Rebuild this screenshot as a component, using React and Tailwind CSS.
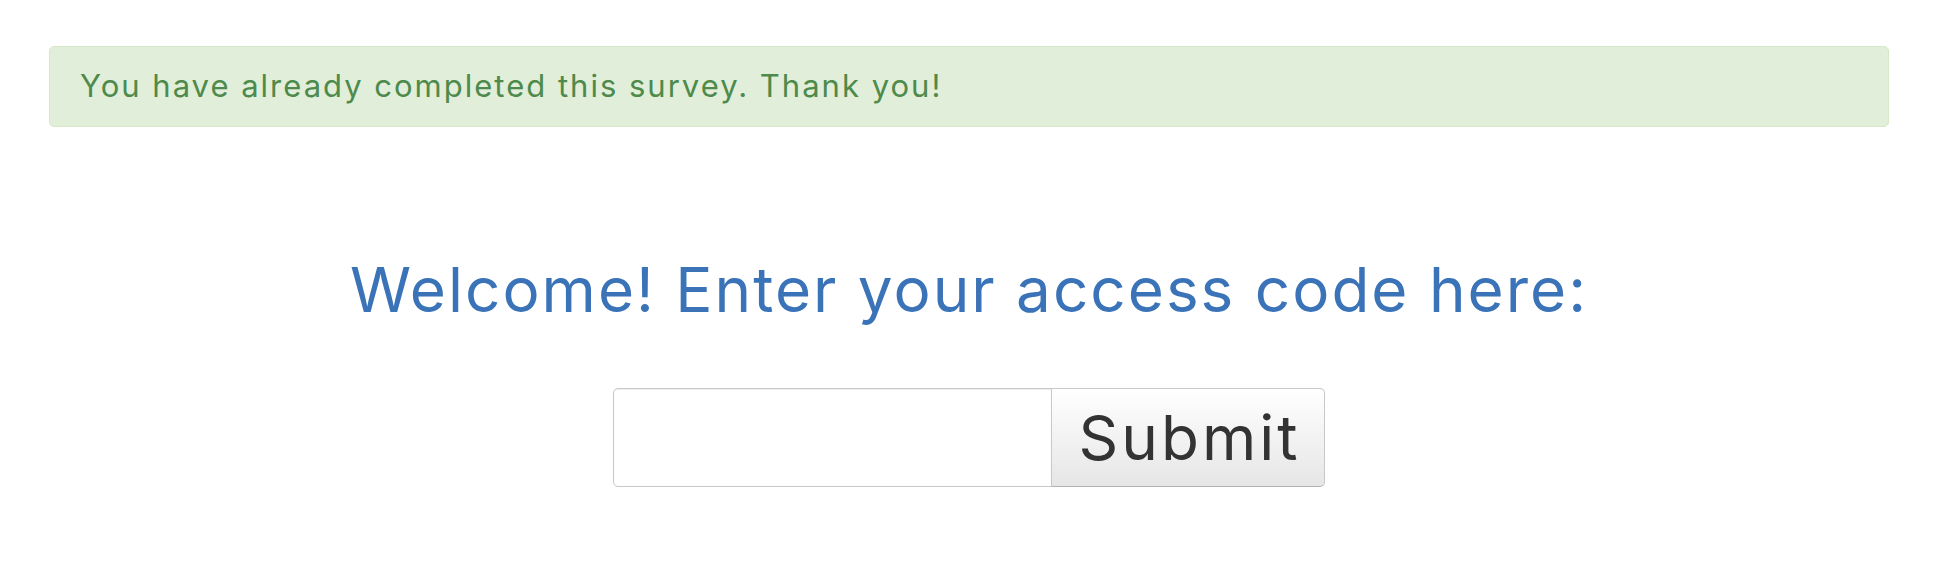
export default function App() {
  return (
    <div
      className="w-[1948px] h-[582px] bg-white"
      style={{ fontFamily: "Inter, 'Noto Sans', sans-serif" }}
    >
      <div className="ml-[49px] w-[1840px] pt-[46px]">
        <div className="h-[81px] flex items-center px-[30px] bg-[#e1eed9] border border-[#d6e9c6] rounded-[5px] text-[#4d8a4b] text-[31px] tracking-[2px]">
          You have already completed this survey. Thank you!
        </div>
        <h1 className="mt-[132px] text-center text-[62px] leading-[62px] tracking-[2px] text-[#3a73b7] font-normal">
          Welcome! Enter your access code here:
        </h1>
        <form className="mt-[67px] flex justify-center" onSubmit={(e) => e.preventDefault()}>
          <input
            type="text"
            className="w-[439px] h-[99px] border border-[#c8c8c8] rounded-l-[5px] bg-white shadow-[inset_0_1px_1px_rgba(0,0,0,0.075)] outline-none"
          />
          <button
            type="submit"
            className="w-[274px] h-[99px] border border-[#c8c8c8] border-b-[#b3b3b3] -ml-px rounded-r-[5px] bg-gradient-to-b from-[#ffffff] to-[#e6e6e6] text-[#333333] text-[62px] leading-none tracking-[3px] pl-[3px]"
          >
            Submit
          </button>
        </form>
      </div>
    </div>
  );
}
